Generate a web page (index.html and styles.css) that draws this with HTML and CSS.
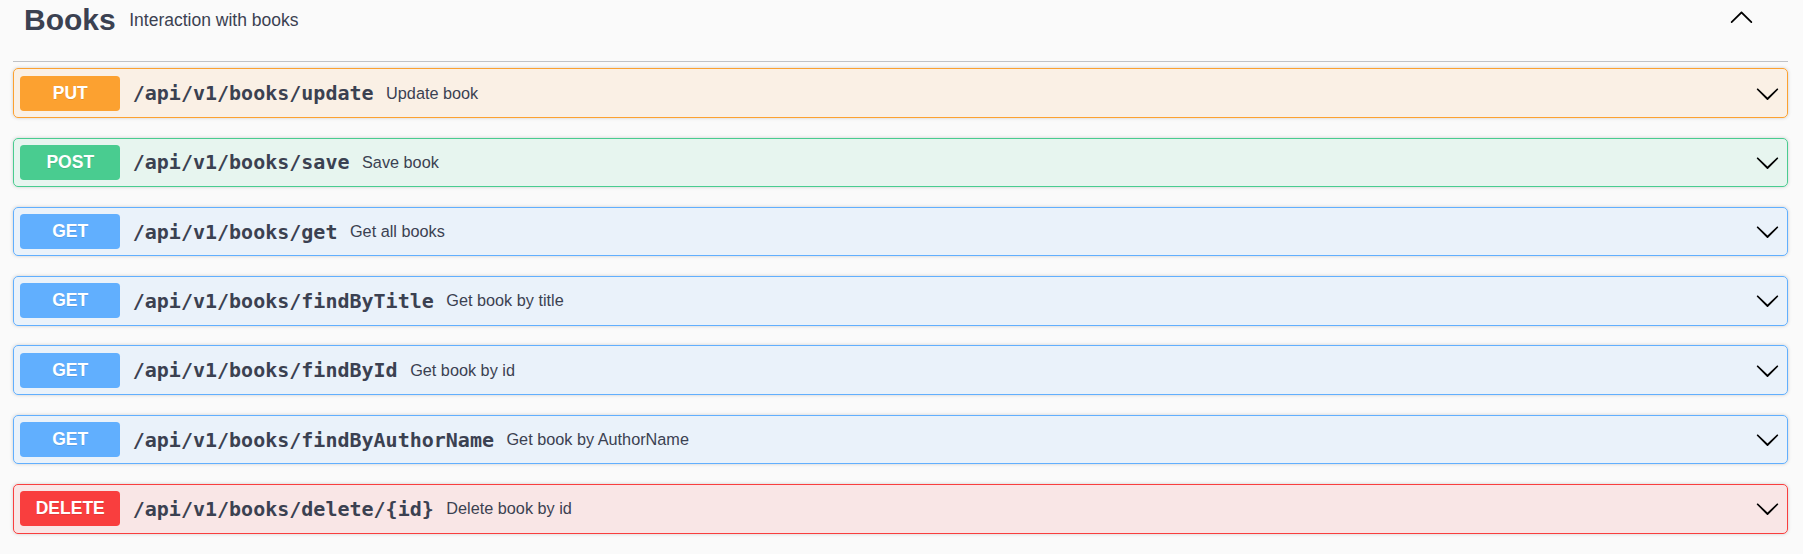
FILE: index.html
```html
<!DOCTYPE html>
<html lang="en">
<head>
<meta charset="utf-8">
<title>Books</title>
<link rel="stylesheet" href="styles.css">
</head>
<body>
<div class="page">
  <div class="tag-section">
    <div class="tag-header">
      <span class="tag-title">Books</span>
      <span class="tag-desc">Interaction with books</span>
      <button class="expand" aria-label="Collapse">
        <svg viewBox="0 0 20 20" width="25" height="25"><path d="M17.418 14.908c.271.268.709.268.979 0s.271-.701 0-.969l-7.908-7.83c-.27-.268-.707-.268-.979 0l-7.908 7.83c-.27.268-.27.701 0 .969.271.268.709.268.979 0L10 7.759l7.418 7.149z"/></svg>
      </button>
    </div>
    <div class="ops">
      <div class="op op-put">
        <div class="summary">
          <span class="method">PUT</span>
          <span class="path">/api/v1/books/update</span>
          <span class="desc">Update book</span>
          <svg class="arrow" viewBox="0 0 20 20" width="25" height="25"><path d="M17.418 6.109c.272-.268.709-.268.979 0s.271.701 0 .969l-7.908 7.83c-.27.268-.707.268-.979 0l-7.908-7.83c-.27-.268-.27-.701 0-.969.271-.268.709-.268.979 0L10 13.25l7.418-7.141z"/></svg>
        </div>
      </div>
      <div class="op op-post">
        <div class="summary">
          <span class="method">POST</span>
          <span class="path">/api/v1/books/save</span>
          <span class="desc">Save book</span>
          <svg class="arrow" viewBox="0 0 20 20" width="25" height="25"><path d="M17.418 6.109c.272-.268.709-.268.979 0s.271.701 0 .969l-7.908 7.83c-.27.268-.707.268-.979 0l-7.908-7.83c-.27-.268-.27-.701 0-.969.271-.268.709-.268.979 0L10 13.25l7.418-7.141z"/></svg>
        </div>
      </div>
      <div class="op op-get">
        <div class="summary">
          <span class="method">GET</span>
          <span class="path">/api/v1/books/get</span>
          <span class="desc">Get all books</span>
          <svg class="arrow" viewBox="0 0 20 20" width="25" height="25"><path d="M17.418 6.109c.272-.268.709-.268.979 0s.271.701 0 .969l-7.908 7.83c-.27.268-.707.268-.979 0l-7.908-7.83c-.27-.268-.27-.701 0-.969.271-.268.709-.268.979 0L10 13.25l7.418-7.141z"/></svg>
        </div>
      </div>
      <div class="op op-get">
        <div class="summary">
          <span class="method">GET</span>
          <span class="path">/api/v1/books/findByTitle</span>
          <span class="desc">Get book by title</span>
          <svg class="arrow" viewBox="0 0 20 20" width="25" height="25"><path d="M17.418 6.109c.272-.268.709-.268.979 0s.271.701 0 .969l-7.908 7.83c-.27.268-.707.268-.979 0l-7.908-7.83c-.27-.268-.27-.701 0-.969.271-.268.709-.268.979 0L10 13.25l7.418-7.141z"/></svg>
        </div>
      </div>
      <div class="op op-get">
        <div class="summary">
          <span class="method">GET</span>
          <span class="path">/api/v1/books/findById</span>
          <span class="desc">Get book by id</span>
          <svg class="arrow" viewBox="0 0 20 20" width="25" height="25"><path d="M17.418 6.109c.272-.268.709-.268.979 0s.271.701 0 .969l-7.908 7.83c-.27.268-.707.268-.979 0l-7.908-7.83c-.27-.268-.27-.701 0-.969.271-.268.709-.268.979 0L10 13.25l7.418-7.141z"/></svg>
        </div>
      </div>
      <div class="op op-get">
        <div class="summary">
          <span class="method">GET</span>
          <span class="path">/api/v1/books/findByAuthorName</span>
          <span class="desc">Get book by AuthorName</span>
          <svg class="arrow" viewBox="0 0 20 20" width="25" height="25"><path d="M17.418 6.109c.272-.268.709-.268.979 0s.271.701 0 .969l-7.908 7.83c-.27.268-.707.268-.979 0l-7.908-7.83c-.27-.268-.27-.701 0-.969.271-.268.709-.268.979 0L10 13.25l7.418-7.141z"/></svg>
        </div>
      </div>
      <div class="op op-delete">
        <div class="summary">
          <span class="method">DELETE</span>
          <span class="path">/api/v1/books/delete/{id}</span>
          <span class="desc">Delete book by id</span>
          <svg class="arrow" viewBox="0 0 20 20" width="25" height="25"><path d="M17.418 6.109c.272-.268.709-.268.979 0s.271.701 0 .969l-7.908 7.83c-.27.268-.707.268-.979 0l-7.908-7.83c-.27-.268-.27-.701 0-.969.271-.268.709-.268.979 0L10 13.25l7.418-7.141z"/></svg>
        </div>
      </div>
    </div>
  </div>
</div>
</body>
</html>
```

FILE: styles.css
```css
html, body {
  margin: 0;
  padding: 0;
  background: #fafafa;
}

body {
  font-family: "Liberation Sans", Arial, sans-serif;
  color: #3b4151;
}

.page {
  padding: 0 15px 0 13px;
}

.tag-header {
  display: flex;
  align-items: flex-start;
  height: 61px;
  padding-left: 11px;
  border-bottom: 1px solid rgba(59, 65, 81, 0.3);
}

.tag-title {
  font-size: 30px;
  font-weight: 700;
  line-height: 34px;
  margin-top: 3.3px;
}

.tag-desc {
  flex: 1;
  font-size: 17.5px;
  line-height: 20px;
  margin: 10px 0 0 13.5px;
}

.expand {
  width: 25px;
  height: 25px;
  margin: 4.3px 33.6px 0 0;
  padding: 0;
  border: 0;
  background: none;
}

.expand svg,
.arrow {
  display: block;
  fill: #000;
}

.ops {
  padding-top: 6.3px;
}

.op {
  border: 1px solid;
  border-radius: 5px;
  box-shadow: 0 0 3.75px rgba(0, 0, 0, 0.19);
  margin-bottom: 19.8px;
}

.summary {
  display: flex;
  align-items: center;
  padding: 6.25px;
}

.method {
  flex: none;
  width: 100px;
  height: 35px;
  display: flex;
  align-items: center;
  justify-content: center;
  border-radius: 3.75px;
  font-size: 17.5px;
  font-weight: 700;
  color: #fff;
  text-shadow: 0 1px 0 rgba(0, 0, 0, 0.1);
}

.path {
  font-family: "DejaVu Sans Mono", monospace;
  font-weight: 700;
  font-size: 20px;
  padding: 0 12.5px;
  color: #3b4151;
}

.desc {
  flex: 1;
  font-size: 16.25px;
  color: #3b4151;
}

.arrow {
  flex: none;
  width: 25px;
  height: 25px;
  margin-right: 1.25px;
}

.op-put {
  border-color: #fca130;
  background: rgba(252, 161, 48, 0.1);
}
.op-put .method { background: #fca130; }

.op-post {
  border-color: #49cc90;
  background: rgba(73, 204, 144, 0.1);
}
.op-post .method { background: #49cc90; }

.op-get {
  border-color: #61affe;
  background: rgba(97, 175, 254, 0.1);
}
.op-get .method { background: #61affe; }

.op-delete {
  border-color: #f93e3e;
  background: rgba(249, 62, 62, 0.1);
}
.op-delete .method { background: #f93e3e; }
```
